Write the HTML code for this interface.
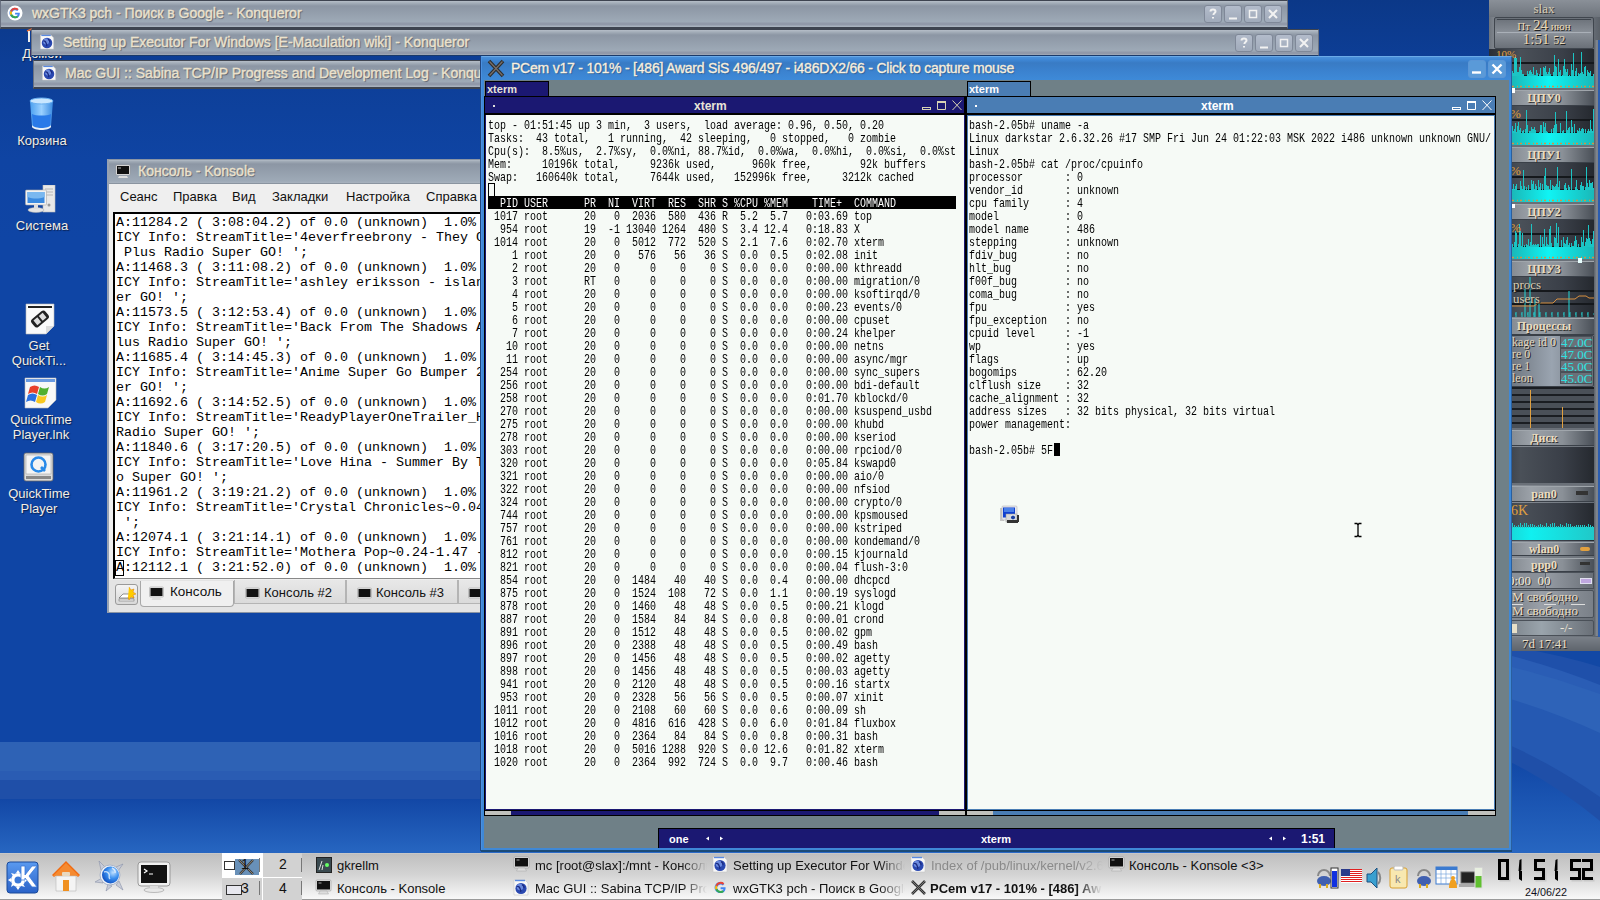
<!DOCTYPE html><html><head><meta charset="utf-8"><style>*{margin:0;padding:0;box-sizing:border-box}
html,body{width:1600px;height:900px;overflow:hidden}
body{position:relative;font-family:"Liberation Sans",sans-serif;background:linear-gradient(#0b3888 0,#0d3e96 60px,#0f44a3 160px,#0f45a5 240px,#0f45a5 100%)}
.a{position:absolute}
pre{font-family:"Liberation Mono",monospace;margin:0}
.tb{position:absolute;height:28px;background:linear-gradient(#b6bec8 0,#a4aeb9 2px,#8c96a4 5px,#9eaab7 21px,#9199a9 22px,#9199a9 24px,#a8b2be 25px);border-top:1px solid #3e4450;border-bottom:2px solid #3e4450;border-left:1px solid #6a7282;border-right:1px solid #6a7282;overflow:hidden}
.tt{position:absolute;top:4px;font-size:14px;color:#ece2cc;-webkit-text-stroke:0.35px #ece2cc;text-shadow:1px 1px 1px #505868;white-space:nowrap}
.btn{position:absolute;top:4px;width:18px;height:18px;border:1px solid #7f8898;border-radius:3px;background:linear-gradient(#b3bccb,#a0aaba)}
.btn svg{position:absolute;left:0;top:0}
.gl{position:absolute;width:16px;height:16px}
.hd{background:#000;color:#fff}
.cur{background:#000}
</style></head><body><div class="a" style="left:0;top:742px;width:1600px;height:29px;background:#2e62b5"></div>
<div class="a" style="left:0;top:771px;width:1600px;height:9px;background:#2a5cb3"></div>
<div class="a" style="left:0;top:780px;width:1600px;height:19px;background:#1f4fa8"></div>
<div class="a" style="left:0;top:799px;width:1600px;height:54px;background:linear-gradient(#1247a6,#2766c1)"></div>
<style>.dl{position:absolute;font-size:13px;color:#f2eee4;text-shadow:1px 1px 1px #0a2050;white-space:nowrap;text-align:center;width:90px;line-height:15px}</style>
<svg class="a" style="left:29px;top:97px" width="25" height="33" viewBox="0 0 25 33"><defs><linearGradient id="tg" x1="0" x2="1"><stop offset="0" stop-color="#4aa0f0"/><stop offset=".5" stop-color="#9ad0ff"/><stop offset="1" stop-color="#3a8ae0"/></linearGradient></defs><path d="M1 4c0-3 23-3 23 0l-2 25c0 3-19 3-19 0z" fill="url(#tg)"/><ellipse cx="12.5" cy="4" rx="11.5" ry="3" fill="#c8e6ff" stroke="#6ab0f0"/><path d="M3 17c4 2 15 2 19 0l-.8 12c0 3-17.4 3-17.4 0z" fill="#2a7ae8"/><path d="M3 28c2 4 17 4 19 0v2c-2 4-17 4-19 0z" fill="#e8f0f8"/></svg>
<div class="dl" style="left:-3px;top:133px">Корзина</div>
<svg class="a" style="left:25px;top:185px" width="32" height="28" viewBox="0 0 32 28"><rect x="18" y="0" width="12" height="27" fill="#e8e8e8" stroke="#bbb" stroke-width=".6"/><path d="M20 4h8M20 7h8M20 10h8" stroke="#aaa" stroke-width=".8"/><circle cx="24" cy="20" r="1.5" fill="#999"/><rect x="0.5" y="5" width="21" height="15" rx="1" fill="#f2f2f2" stroke="#aaa" stroke-width=".6"/><rect x="2.5" y="7" width="17" height="11" fill="#3a8ae0"/><path d="M2.5 7h17v5c-6 2-11 2-17 0z" fill="#7ab8f0"/><ellipse cx="11" cy="25" rx="8" ry="2.5" fill="#e4e4e4" stroke="#aaa" stroke-width=".5"/><rect x="9" y="20" width="4" height="4" fill="#ddd"/></svg>
<div class="dl" style="left:-3px;top:218px">Система</div>
<svg class="a" style="left:25px;top:303px" width="30" height="32" viewBox="0 0 30 32"><path d="M1 1h28v22l-8 8H1z" fill="#fafafa" stroke="#bbb" stroke-width=".6"/><rect x="3" y="3" width="24" height="2" fill="#222"/><path d="M21 31l8-8h-8z" fill="#ddd"/><g transform="rotate(-40 15 16)"><rect x="6" y="11" width="18" height="10" rx="3" fill="#222"/><rect x="9" y="13" width="5" height="6" fill="#ddd"/><rect x="16" y="13" width="5" height="6" fill="#ddd"/></g></svg>
<div class="dl" style="left:-6px;top:338px">Get<br>QuickTi...</div>
<svg class="a" style="left:24px;top:377px" width="33" height="32" viewBox="0 0 33 32"><path d="M1 1h31v22l-8 8H1z" fill="#f8f8f8" stroke="#bbb" stroke-width=".6"/><rect x="2" y="2" width="29" height="3" fill="#6a9ae0"/><path d="M6 10c3-2 6-2 9 0l-2 7c-3-2-6-2-9 0z" fill="#e8402a"/><path d="M16 10c3 2 6 2 9 0l-2 7c-3 2-6 2-9 0z" fill="#50b030"/><path d="M4 18c3-2 6-2 9 0l-2 7c-3-2-6-2-9 0z" fill="#2a70e0"/><path d="M14 18c3 2 6 2 9 0l-2 7c-3 2-6 2-9 0z" fill="#f8c820"/></svg>
<div class="dl" style="left:-4px;top:412px">QuickTime<br>Player.lnk</div>
<svg class="a" style="left:23px;top:452px" width="31" height="30" viewBox="0 0 31 30"><rect x="1" y="1" width="29" height="28" rx="2" fill="#dcdcdc" stroke="#666" stroke-width=".8"/><rect x="3" y="3" width="25" height="19" fill="#f4f4f4" stroke="#999" stroke-width=".5"/><circle cx="15.5" cy="12.5" r="7" fill="none" stroke="#2a8ae8" stroke-width="2.6"/><path d="M18 15l4 4" stroke="#2a8ae8" stroke-width="2.6"/><rect x="3" y="24" width="25" height="3" fill="#888"/></svg>
<div class="dl" style="left:-6px;top:486px">QuickTime<br>Player</div>
<svg class="a" style="left:1500px;top:640px" width="100" height="213" viewBox="1500 640 100 213">
<defs><linearGradient id="dkg" x1="0" y1="0" x2="0" y2="1"><stop offset="0" stop-color="#1046a5"/><stop offset="1" stop-color="#2766c1"/></linearGradient></defs>
<rect x="1500" y="640" width="100" height="213" fill="#1248a5"/>
<path d="M1500 645Q1550 652 1600 667V853H1500z" fill="#1f50aa"/>
<path d="M1500 653Q1550 665 1600 685V853H1500z" fill="#2a5db5"/>
<path d="M1500 664Q1550 676 1600 694V853H1500z" fill="#2e63b8"/>
<path d="M1500 696Q1550 710 1600 733V853H1500z" fill="#2559b2"/>
<path d="M1500 741Q1550 762 1600 797V853H1500z" fill="#1f4fa8"/>
<path d="M1500 757Q1550 780 1600 821V853H1500z" fill="url(#dkg)"/>
</svg>
<div class="a" style="left:1489px;top:0;width:111px;height:651px;background:linear-gradient(90deg,#6e747c,#8a9098 8%,#7c828a 50%,#6a7078 92%,#5a6068)"></div>
<div class="a" style="left:1594px;top:40px;width:6px;height:596px;background:linear-gradient(90deg,#5a6068,#868c94,#4a5058)"></div>
<div class="a" style="left:1598px;top:40px;width:2px;height:611px;background:#2a5cb0"></div>
<div class="a" style="left:1489px;top:0;width:111px;height:17px;background:linear-gradient(#8a9098,#6e747c)"></div>
<div class="a" style="left:1489px;top:1px;width:110px;text-align:center;font-family:'Liberation Serif',serif;font-size:13px;color:#d8ccb4;text-shadow:1px 1px 0 #333">slax</div>
<div class="a" style="left:1494px;top:17px;width:100px;height:32px;background:linear-gradient(#6a7078,#8a9098 50%,#6a7078);border:1px solid #40464e;border-radius:2px"></div>
<div class="a" style="left:1497px;top:19px;width:94px;height:1px;background:#3e444c"></div>
<div class="a" style="left:1497px;top:32px;width:94px;height:1px;background:#aab0b8"></div>
<div class="a" style="left:1494px;top:18px;width:100px;text-align:center;font-family:'Liberation Serif',serif;font-size:11px;color:#e8d8b8;text-shadow:1px 1px 0 #222;line-height:15px">Пт <span style="font-size:15px">24</span> июн</div>
<div class="a" style="left:1494px;top:31px;width:100px;text-align:center;font-family:'Liberation Serif',serif;font-size:15px;color:#e8d8b8;text-shadow:1px 1px 0 #222;line-height:17px">1:51 <span style="font-size:12px">52</span></div>
<div class="a" style="left:1489px;top:49px;width:105px;height:39px;background:linear-gradient(90deg,#2a2e36,#4a5058 30%,#3a3f48 70%,#25292f);overflow:hidden"><div class="a" style="left:0;top:13px;width:105px;height:2px;background:#15181c"></div><div class="a" style="left:0;top:26px;width:105px;height:2px;background:#15181c"></div><svg class="a" style="left:0;top:0" width="105" height="39"><defs><linearGradient id="cg49" x1="0" x2="1"><stop offset="0" stop-color="#1ab8b8"/><stop offset=".45" stop-color="#10f4f4"/><stop offset="1" stop-color="#1ab8b8"/></linearGradient></defs><path d="M23.5 39V22M24.5 39V24M25.5 39V9M26.5 39V8M27.5 39V9M28.5 39V23M29.5 39V23M30.5 39V18M31.5 39V8M32.5 39V21M33.5 39V25M34.5 39V25M35.5 39V29M36.5 39V29M37.5 39V28M38.5 39V22M39.5 39V25M40.5 39V22M41.5 39V21M42.5 39V23M43.5 39V25M44.5 39V18M45.5 39V26M46.5 39V26M47.5 39V21M48.5 39V24M49.5 39V29M50.5 39V25M51.5 39V19M52.5 39V27M53.5 39V29M54.5 39V18M55.5 39V19M56.5 39V17M57.5 39V23M58.5 39V25M59.5 39V23M60.5 39V19M61.5 39V25M62.5 39V29M63.5 39V27M64.5 39V23M65.5 39V6M66.5 39V17M67.5 39V18M68.5 39V27M69.5 39V10M70.5 39V23M71.5 39V21M72.5 39V28M73.5 39V26M74.5 39V17M75.5 39V10M76.5 39V20M77.5 39V23M78.5 39V20M79.5 39V27M80.5 39V26M81.5 39V28M82.5 39V15M83.5 39V21M84.5 39V4M85.5 39V27M86.5 39V22M87.5 39V19M88.5 39V27M89.5 39V24M90.5 39V25M91.5 39V24M92.5 39V3M93.5 39V23M94.5 39V25M95.5 39V18M96.5 39V17M97.5 39V29M98.5 39V21M99.5 39V23M100.5 39V24M101.5 39V22M102.5 39V27M103.5 39V29M104.5 39V25" stroke="#1cc4c4" stroke-width="1"/><rect x="23" y="27" width="82" height="12" fill="url(#cg49)"/><path d="M23 37.5H105" stroke="#d89040" stroke-width="1.5" stroke-dasharray="2 3 1 2"/></svg></div>
<div class="a" style="left:1489px;top:88px;width:105px;height:2px;background:#6a7078"></div>
<div class="a" style="left:1489px;top:90px;width:105px;height:16px;background:linear-gradient(90deg,#6c7279,#9ba1a8 40%,#8a9097 70%,#4a5058);border-top:1px solid #a0a6ac;border-bottom:1px solid #3a4048"></div><div class="a" style="left:1489px;top:90px;width:110px;text-align:center;font-family:'Liberation Serif',serif;font-weight:bold;font-size:12px;line-height:16px;color:#eadcc0;text-shadow:1px 1px 0 #333">ЦПУ0</div>
<div class="a" style="left:1489px;top:106px;width:105px;height:39px;background:linear-gradient(90deg,#2a2e36,#4a5058 30%,#3a3f48 70%,#25292f);overflow:hidden"><div class="a" style="left:0;top:13px;width:105px;height:2px;background:#15181c"></div><div class="a" style="left:0;top:26px;width:105px;height:2px;background:#15181c"></div><svg class="a" style="left:0;top:0" width="105" height="39"><defs><linearGradient id="cg106" x1="0" x2="1"><stop offset="0" stop-color="#1ab8b8"/><stop offset=".45" stop-color="#10f4f4"/><stop offset="1" stop-color="#1ab8b8"/></linearGradient></defs><path d="M23.5 39V20M24.5 39V25M25.5 39V23M26.5 39V17M27.5 39V26M28.5 39V20M29.5 39V16M30.5 39V24M31.5 39V22M32.5 39V28M33.5 39V25M34.5 39V24M35.5 39V27M36.5 39V23M37.5 39V4M38.5 39V19M39.5 39V27M40.5 39V25M41.5 39V25M42.5 39V21M43.5 39V23M44.5 39V23M45.5 39V21M46.5 39V24M47.5 39V28M48.5 39V27M49.5 39V29M50.5 39V26M51.5 39V19M52.5 39V19M53.5 39V27M54.5 39V16M55.5 39V21M56.5 39V17M57.5 39V25M58.5 39V26M59.5 39V27M60.5 39V29M61.5 39V29M62.5 39V23M63.5 39V28M64.5 39V22M65.5 39V19M66.5 39V6M67.5 39V18M68.5 39V29M69.5 39V28M70.5 39V29M71.5 39V17M72.5 39V28M73.5 39V25M74.5 39V24M75.5 39V28M76.5 39V28M77.5 39V5M78.5 39V24M79.5 39V22M80.5 39V21M81.5 39V28M82.5 39V14M83.5 39V21M84.5 39V27M85.5 39V18M86.5 39V29M87.5 39V27M88.5 39V24M89.5 39V25M90.5 39V22M91.5 39V25M92.5 39V23M93.5 39V22M94.5 39V23M95.5 39V28M96.5 39V23M97.5 39V27M98.5 39V25M99.5 39V23M100.5 39V25M101.5 39V14M102.5 39V23M103.5 39V25M104.5 39V3" stroke="#1cc4c4" stroke-width="1"/><rect x="23" y="27" width="82" height="12" fill="url(#cg106)"/><path d="M23 37.5H105" stroke="#d89040" stroke-width="1.5" stroke-dasharray="2 3 1 2"/></svg></div>
<div class="a" style="left:1489px;top:145px;width:105px;height:2px;background:#6a7078"></div>
<div class="a" style="left:1489px;top:147px;width:105px;height:16px;background:linear-gradient(90deg,#6c7279,#9ba1a8 40%,#8a9097 70%,#4a5058);border-top:1px solid #a0a6ac;border-bottom:1px solid #3a4048"></div><div class="a" style="left:1489px;top:147px;width:110px;text-align:center;font-family:'Liberation Serif',serif;font-weight:bold;font-size:12px;line-height:16px;color:#eadcc0;text-shadow:1px 1px 0 #333">ЦПУ1</div>
<div class="a" style="left:1489px;top:163px;width:105px;height:39px;background:linear-gradient(90deg,#2a2e36,#4a5058 30%,#3a3f48 70%,#25292f);overflow:hidden"><div class="a" style="left:0;top:13px;width:105px;height:2px;background:#15181c"></div><div class="a" style="left:0;top:26px;width:105px;height:2px;background:#15181c"></div><svg class="a" style="left:0;top:0" width="105" height="39"><defs><linearGradient id="cg163" x1="0" x2="1"><stop offset="0" stop-color="#1ab8b8"/><stop offset=".45" stop-color="#10f4f4"/><stop offset="1" stop-color="#1ab8b8"/></linearGradient></defs><path d="M23.5 39V26M24.5 39V21M25.5 39V26M26.5 39V23M27.5 39V21M28.5 39V27M29.5 39V28M30.5 39V28M31.5 39V18M32.5 39V23M33.5 39V26M34.5 39V7M35.5 39V23M36.5 39V28M37.5 39V24M38.5 39V28M39.5 39V22M40.5 39V28M41.5 39V29M42.5 39V17M43.5 39V21M44.5 39V18M45.5 39V26M46.5 39V21M47.5 39V23M48.5 39V29M49.5 39V17M50.5 39V24M51.5 39V20M52.5 39V29M53.5 39V21M54.5 39V29M55.5 39V13M56.5 39V5M57.5 39V22M58.5 39V23M59.5 39V23M60.5 39V26M61.5 39V17M62.5 39V29M63.5 39V22M64.5 39V23M65.5 39V24M66.5 39V23M67.5 39V21M68.5 39V4M69.5 39V24M70.5 39V18M71.5 39V27M72.5 39V29M73.5 39V28M74.5 39V28M75.5 39V22M76.5 39V20M77.5 39V25M78.5 39V27M79.5 39V22M80.5 39V24M81.5 39V29M82.5 39V6M83.5 39V28M84.5 39V28M85.5 39V29M86.5 39V24M87.5 39V17M88.5 39V26M89.5 39V27M90.5 39V28M91.5 39V22M92.5 39V19M93.5 39V23M94.5 39V23M95.5 39V27M96.5 39V24M97.5 39V4M98.5 39V20M99.5 39V24M100.5 39V17M101.5 39V20M102.5 39V20M103.5 39V19M104.5 39V25" stroke="#1cc4c4" stroke-width="1"/><rect x="23" y="27" width="82" height="12" fill="url(#cg163)"/><path d="M23 37.5H105" stroke="#d89040" stroke-width="1.5" stroke-dasharray="2 3 1 2"/></svg></div>
<div class="a" style="left:1489px;top:202px;width:105px;height:2px;background:#6a7078"></div>
<div class="a" style="left:1489px;top:204px;width:105px;height:16px;background:linear-gradient(90deg,#6c7279,#9ba1a8 40%,#8a9097 70%,#4a5058);border-top:1px solid #a0a6ac;border-bottom:1px solid #3a4048"></div><div class="a" style="left:1489px;top:204px;width:110px;text-align:center;font-family:'Liberation Serif',serif;font-weight:bold;font-size:12px;line-height:16px;color:#eadcc0;text-shadow:1px 1px 0 #333">ЦПУ2</div>
<div class="a" style="left:1489px;top:220px;width:105px;height:39px;background:linear-gradient(90deg,#2a2e36,#4a5058 30%,#3a3f48 70%,#25292f);overflow:hidden"><div class="a" style="left:0;top:13px;width:105px;height:2px;background:#15181c"></div><div class="a" style="left:0;top:26px;width:105px;height:2px;background:#15181c"></div><svg class="a" style="left:0;top:0" width="105" height="39"><defs><linearGradient id="cg220" x1="0" x2="1"><stop offset="0" stop-color="#1ab8b8"/><stop offset=".45" stop-color="#10f4f4"/><stop offset="1" stop-color="#1ab8b8"/></linearGradient></defs><path d="M23.5 39V24M24.5 39V27M25.5 39V22M26.5 39V11M27.5 39V13M28.5 39V28M29.5 39V24M30.5 39V4M31.5 39V11M32.5 39V26M33.5 39V13M34.5 39V29M35.5 39V25M36.5 39V28M37.5 39V24M38.5 39V25M39.5 39V19M40.5 39V26M41.5 39V22M42.5 39V4M43.5 39V25M44.5 39V24M45.5 39V25M46.5 39V24M47.5 39V25M48.5 39V24M49.5 39V24M50.5 39V29M51.5 39V15M52.5 39V29M53.5 39V17M54.5 39V24M55.5 39V9M56.5 39V26M57.5 39V17M58.5 39V24M59.5 39V25M60.5 39V9M61.5 39V6M62.5 39V23M63.5 39V28M64.5 39V28M65.5 39V17M66.5 39V18M67.5 39V3M68.5 39V23M69.5 39V7M70.5 39V29M71.5 39V27M72.5 39V20M73.5 39V28M74.5 39V17M75.5 39V23M76.5 39V24M77.5 39V20M78.5 39V17M79.5 39V25M80.5 39V23M81.5 39V29M82.5 39V23M83.5 39V26M84.5 39V26M85.5 39V21M86.5 39V16M87.5 39V20M88.5 39V28M89.5 39V24M90.5 39V29M91.5 39V28M92.5 39V17M93.5 39V22M94.5 39V10M95.5 39V26M96.5 39V22M97.5 39V18M98.5 39V19M99.5 39V5M100.5 39V18M101.5 39V21M102.5 39V24M103.5 39V19M104.5 39V11" stroke="#1cc4c4" stroke-width="1"/><rect x="23" y="27" width="82" height="12" fill="url(#cg220)"/><path d="M23 37.5H105" stroke="#d89040" stroke-width="1.5" stroke-dasharray="2 3 1 2"/></svg></div>
<div class="a" style="left:1489px;top:259px;width:105px;height:2px;background:#6a7078"></div>
<div class="a" style="left:1489px;top:261px;width:105px;height:16px;background:linear-gradient(90deg,#6c7279,#9ba1a8 40%,#8a9097 70%,#4a5058);border-top:1px solid #a0a6ac;border-bottom:1px solid #3a4048"></div><div class="a" style="left:1489px;top:261px;width:110px;text-align:center;font-family:'Liberation Serif',serif;font-weight:bold;font-size:12px;line-height:16px;color:#eadcc0;text-shadow:1px 1px 0 #333">ЦПУ3</div>
<div class="a" style="left:1496px;top:49px;font-family:'Liberation Serif',serif;font-size:11px;line-height:11px;color:#e0a040">10%</div>
<div class="a" style="left:1510px;top:107px;font-family:'Liberation Serif',serif;font-size:13px;line-height:13px;color:#e0a040">%</div>
<div class="a" style="left:1510px;top:164px;font-family:'Liberation Serif',serif;font-size:13px;line-height:13px;color:#e0a040">%</div>
<div class="a" style="left:1510px;top:221px;font-family:'Liberation Serif',serif;font-size:13px;line-height:13px;color:#e0a040">%</div>
<div class="a" style="left:1512px;top:88px;width:3px;height:5px;background:#fff"></div>
<div class="a" style="left:1512px;top:204px;width:3px;height:4px;background:#fff"></div>
<div class="a" style="left:1578px;top:258px;width:4px;height:5px;background:#e8ffff"></div>
<div class="a" style="left:1489px;top:277px;width:105px;height:40px;background:linear-gradient(90deg,#2a2e36,#4a5058 30%,#3a3f48 70%,#25292f);overflow:hidden"><div class="a" style="left:0;top:13px;width:105px;height:2px;background:#15181c"></div><div class="a" style="left:0;top:26px;width:105px;height:2px;background:#15181c"></div></div>
<svg class="a" style="left:1489px;top:277px" width="105" height="40"><path d="M20 37H105" stroke="#22bbbb" stroke-dasharray="1 5"/><path d="M21 40v-5M27 40v-5M33 40v-5M39 40v-5M45 40v-5M51 40v-5M57 40v-5M63 40v-5M69 40v-5M75 40v-5M81 40v-5M87 40v-5M93 40v-5M99 40v-5" stroke="#22cccc"/><path d="M36 40V12M41 40V0M46 40V22M50 40V26M80 40V14" stroke="#22d8d8"/><path d="M20 29H45l4-3h15l4-4h18l4-3h7l3 2h10" stroke="#d89040" fill="none"/></svg>
<div class="a" style="left:1513px;top:278px;font-family:'Liberation Serif',serif;font-size:13px;line-height:14px;color:#d8ccb4;text-shadow:1px 1px 0 #222">procs<br>users</div>
<div class="a" style="left:1489px;top:318px;width:105px;height:17px;background:linear-gradient(90deg,#6c7279,#9ba1a8 40%,#8a9097 70%,#4a5058);border-top:1px solid #a0a6ac;border-bottom:1px solid #3a4048"></div><div class="a" style="left:1489px;top:318px;width:110px;text-align:center;font-family:'Liberation Serif',serif;font-weight:bold;font-size:12px;line-height:17px;color:#eadcc0;text-shadow:1px 1px 0 #333">Процессы</div>
<div class="a" style="left:1489px;top:335px;width:105px;height:52px;background:linear-gradient(90deg,#5a6068,#9aa4b0 60%,#6a7078);border:1px solid #3a4048;border-radius:2px"></div>
<div class="a" style="left:1512px;top:336px;font-family:'Liberation Serif',serif;font-size:12px;line-height:12px;color:#e0d4bc;text-shadow:1px 1px 0 #222">kage id 0</div>
<div class="a" style="left:1560px;top:336px;width:32px;height:12px;border:1px solid #4a5058;background:#6a7078"></div>
<div class="a" style="left:1561px;top:336px;font-family:'Liberation Serif',serif;font-size:13px;line-height:13px;color:#30e0e0">47.0C</div>
<div class="a" style="left:1512px;top:348px;font-family:'Liberation Serif',serif;font-size:12px;line-height:12px;color:#e0d4bc;text-shadow:1px 1px 0 #222">re 0</div>
<div class="a" style="left:1560px;top:348px;width:32px;height:12px;border:1px solid #4a5058;background:#6a7078"></div>
<div class="a" style="left:1561px;top:348px;font-family:'Liberation Serif',serif;font-size:13px;line-height:13px;color:#30e0e0">47.0C</div>
<div class="a" style="left:1512px;top:360px;font-family:'Liberation Serif',serif;font-size:12px;line-height:12px;color:#e0d4bc;text-shadow:1px 1px 0 #222">re 1</div>
<div class="a" style="left:1560px;top:360px;width:32px;height:12px;border:1px solid #4a5058;background:#6a7078"></div>
<div class="a" style="left:1561px;top:360px;font-family:'Liberation Serif',serif;font-size:13px;line-height:13px;color:#30e0e0">45.0C</div>
<div class="a" style="left:1512px;top:372px;font-family:'Liberation Serif',serif;font-size:12px;line-height:12px;color:#e0d4bc;text-shadow:1px 1px 0 #222">leon</div>
<div class="a" style="left:1560px;top:372px;width:32px;height:12px;border:1px solid #4a5058;background:#6a7078"></div>
<div class="a" style="left:1561px;top:372px;font-family:'Liberation Serif',serif;font-size:13px;line-height:13px;color:#30e0e0">45.0C</div>
<div class="a" style="left:1489px;top:387px;width:105px;height:41px;background:repeating-linear-gradient(#1a1d22 0 2px,#4a5058 2px 7px)"></div>
<div class="a" style="left:1530px;top:390px;width:1px;height:38px;background:#e0a040"></div>
<div class="a" style="left:1562px;top:407px;width:1px;height:21px;background:#e0a040"></div>
<div class="a" style="left:1489px;top:428px;width:105px;height:2px;background:#6a7078"></div>
<div class="a" style="left:1489px;top:430px;width:105px;height:16px;background:linear-gradient(90deg,#6c7279,#9ba1a8 40%,#8a9097 70%,#4a5058);border-top:1px solid #a0a6ac;border-bottom:1px solid #3a4048"></div><div class="a" style="left:1489px;top:430px;width:110px;text-align:center;font-family:'Liberation Serif',serif;font-weight:bold;font-size:12px;line-height:16px;color:#eadcc0;text-shadow:1px 1px 0 #333">Диск</div>
<div class="a" style="left:1489px;top:447px;width:105px;height:36px;background:linear-gradient(90deg,#2a2e36,#4a5058 30%,#3a3f48 70%,#25292f)"></div>
<div class="a" style="left:1489px;top:483px;width:105px;height:2px;background:#6a7078"></div>
<div class="a" style="left:1489px;top:486px;width:105px;height:16px;background:linear-gradient(90deg,#6c7279,#9ba1a8 40%,#8a9097 70%,#4a5058);border-top:1px solid #a0a6ac;border-bottom:1px solid #3a4048"></div><div class="a" style="left:1489px;top:486px;width:110px;text-align:center;font-family:'Liberation Serif',serif;font-weight:bold;font-size:12px;line-height:16px;color:#eadcc0;text-shadow:1px 1px 0 #333">pan0</div>
<div class="a" style="left:1576px;top:491px;width:12px;height:4px;background:#333"></div>
<div class="a" style="left:1489px;top:503px;width:105px;height:38px;background:linear-gradient(90deg,#2a2e36,#4a5058 30%,#3a3f48 70%,#25292f)"></div>
<div class="a" style="left:1489px;top:527px;width:105px;height:13px;background:linear-gradient(90deg,#20c0c0,#10f0f0 40%,#20c8c8)"></div>
<svg class="a" style="left:1512px;top:522px" width="82" height="6"><path d="M0.5 6V1M2.5 6V3M4.5 6V4M6.5 6V3M8.5 6V1M10.5 6V3M12.5 6V1M14.5 6V1M16.5 6V3M18.5 6V2M20.5 6V2M22.5 6V3M24.5 6V4M26.5 6V3M28.5 6V2M30.5 6V3M32.5 6V4M34.5 6V1M36.5 6V4M38.5 6V2M40.5 6V1M42.5 6V1M44.5 6V4M46.5 6V4M48.5 6V2M50.5 6V3M52.5 6V4M54.5 6V1M56.5 6V2M58.5 6V2M60.5 6V4M62.5 6V4M64.5 6V3M66.5 6V3M68.5 6V3M70.5 6V3M72.5 6V3M74.5 6V4M76.5 6V2M78.5 6V3M80.5 6V4" stroke="#20c8c8"/></svg>
<div class="a" style="left:1511px;top:504px;font-family:'Liberation Serif',serif;font-size:14px;line-height:14px;color:#e0a040">6K</div>
<div class="a" style="left:1489px;top:542px;width:105px;height:14px;background:linear-gradient(90deg,#6c7279,#9ba1a8 40%,#8a9097 70%,#4a5058);border-top:1px solid #a0a6ac;border-bottom:1px solid #3a4048"></div><div class="a" style="left:1489px;top:542px;width:110px;text-align:center;font-family:'Liberation Serif',serif;font-weight:bold;font-size:12px;line-height:14px;color:#eadcc0;text-shadow:1px 1px 0 #333">wlan0</div>
<div class="a" style="left:1580px;top:547px;width:10px;height:4px;border-radius:2px;background:#e0a040"></div>
<div class="a" style="left:1489px;top:558px;width:105px;height:14px;background:linear-gradient(90deg,#6c7279,#9ba1a8 40%,#8a9097 70%,#4a5058);border-top:1px solid #a0a6ac;border-bottom:1px solid #3a4048"></div><div class="a" style="left:1489px;top:558px;width:110px;text-align:center;font-family:'Liberation Serif',serif;font-weight:bold;font-size:12px;line-height:14px;color:#eadcc0;text-shadow:1px 1px 0 #333">ppp0</div>
<div class="a" style="left:1580px;top:562px;width:10px;height:3px;background:#333"></div>
<div class="a" style="left:1489px;top:572px;width:105px;height:17px;background:linear-gradient(90deg,#7a8088,#9aa0a8 50%,#6a7078);border:1px solid #4a5058"></div>
<div class="a" style="left:1489px;top:573px;width:57px;height:15px;background:#8a9098;border-right:1px solid #5a6068"></div>
<div class="a" style="left:1508px;top:573px;font-family:'Liberation Serif',serif;font-size:13px;line-height:15px;color:#f0e8d8;text-shadow:1px 1px 0 #333">0:00&nbsp; 00</div>
<div class="a" style="left:1580px;top:578px;width:12px;height:6px;background:#c0a8e0;border:1px solid #e0e0f0"></div>
<div class="a" style="left:1489px;top:590px;width:105px;height:28px;background:linear-gradient(90deg,#6a7078,#9aa0a8 50%,#7a8088);border:1px solid #4a5058;border-radius:2px"></div>
<div class="a" style="left:1512px;top:590px;font-family:'Liberation Serif',serif;font-size:13px;line-height:14px;color:#e8dcc4;text-shadow:1px 1px 0 #222">M свободно<br>M свободно</div>
<div class="a" style="left:1511px;top:604px;width:12px;height:1px;background:#ddd"></div><div class="a" style="left:1544px;top:604px;width:12px;height:1px;background:#ddd"></div><div class="a" style="left:1571px;top:604px;width:14px;height:1px;background:#ddd"></div>
<div class="a" style="left:1489px;top:620px;width:105px;height:16px;background:linear-gradient(90deg,#6a7078,#9aa4ac 50%,#6a7078);border:1px solid #4a5058;border-radius:2px"></div>
<div class="a" style="left:1512px;top:624px;width:5px;height:9px;background:#e8e0c8"></div>
<div class="a" style="left:1560px;top:620px;font-family:'Liberation Serif',serif;font-size:13px;line-height:16px;color:#f0e8d8">-/-</div>
<div class="a" style="left:1489px;top:637px;width:111px;height:14px;background:linear-gradient(#7a8088,#5e646c)"></div>
<div class="a" style="left:1522px;top:636px;font-family:'Liberation Serif',serif;font-size:13px;line-height:15px;color:#e8dcc4;text-shadow:1px 1px 0 #222">7d 17:41</div><div class="tb" style="left:0;top:0;width:1288px;height:29px">
 <svg class="gl" style="left:6px;top:4px" width="17" height="17" viewBox="0 0 17 17"><circle cx="8.5" cy="8.5" r="8" fill="#fff"/><path d="M13.5 8.2H8.6v2h2.8c-.3 1.3-1.4 2.2-2.9 2.2a3.4 3.4 0 1 1 2.3-5.9l1.5-1.5A5.5 5.5 0 1 0 8.5 14c3 0 5.1-2.1 5.1-5.1 0-.3 0-.5-.1-.7z" fill="#4285f4"/><path d="M3.6 6.2l1.7 1.3a3.4 3.4 0 0 1 5.5-1.8l1.5-1.5A5.5 5.5 0 0 0 3.6 6.2z" fill="#ea4335"/><path d="M3.6 10.8a5.5 5.5 0 0 0 4.9 3.2c1.4 0 2.7-.5 3.6-1.3l-1.7-1.4c-.5.4-1.2.6-1.9.6a3.4 3.4 0 0 1-3.2-2.3z" fill="#34a853"/><path d="M3.6 6.2a5.5 5.5 0 0 0 0 4.6l1.7-1.3a3.4 3.4 0 0 1 0-2z" fill="#fbbc05"/></svg>
 <div class="tt" style="left:31px">wxGTK3 pch - Поиск в Google - Konqueror</div>
 <div class="btn" style="left:1203px"><svg width="16" height="16"><path d="M5.5 5.5c0-1.5 1-2 2.5-2s2.5.7 2.5 2c0 1.4-2 1.5-2 3v.5M8 11v1.5" stroke="#f2f2f2" stroke-width="2" fill="none"/></svg></div>
 <div class="btn" style="left:1223px"><svg width="16" height="16"><path d="M4 12.5h8" stroke="#f2f2f2" stroke-width="2"/></svg></div>
 <div class="btn" style="left:1243px"><svg width="16" height="16"><rect x="4.5" y="4.5" width="7" height="7" stroke="#f2f2f2" stroke-width="1.5" fill="none"/></svg></div>
 <div class="btn" style="left:1263px"><svg width="16" height="16"><path d="M4 4l8 8M12 4l-8 8" stroke="#f2f2f2" stroke-width="2"/></svg></div>
</div>
<svg class="a" style="left:24px;top:28px" width="12" height="14"><path d="M3 3l5-2" stroke="#e86a30" stroke-width="1.6"/><path d="M5 3v11" stroke="#eee" stroke-width="2"/></svg>
<div class="dl" style="left:-3px;top:46px">Домой</div>
<div class="tb" style="left:31px;top:29px;width:1288px;height:27px;border-bottom:1px solid #1a3a6a">
 <svg class="gl" style="left:7px;top:4px" width="16" height="17" viewBox="0 0 16 17"><path d="M1 1h11l3 3v12H1z" fill="#f8f8f8" stroke="#c8c8c8" stroke-width=".6"/><path d="M2 1.5h10" stroke="#5a8ae0" stroke-width="1.4"/><circle cx="8" cy="9.5" r="5.6" fill="#2a48b0"/><circle cx="7" cy="8" r="3.2" fill="#7a9ae8" opacity=".8"/><path d="M4 7.5c1.5-.5 2.5.5 3 2s1.5 2 .5 3.5M9 5.5c1 1 2.5 1.5 2 3.5" stroke="#1a2a80" stroke-width="1.3" fill="none"/></svg>
 <div class="tt" style="left:31px">Setting up Executor For Windows [E-Maculation wiki] - Konqueror</div>
 <div class="btn" style="left:1203px"><svg width="16" height="16"><path d="M5.5 5.5c0-1.5 1-2 2.5-2s2.5.7 2.5 2c0 1.4-2 1.5-2 3v.5M8 11v1.5" stroke="#f2f2f2" stroke-width="2" fill="none"/></svg></div>
 <div class="btn" style="left:1223px"><svg width="16" height="16"><path d="M4 12.5h8" stroke="#f2f2f2" stroke-width="2"/></svg></div>
 <div class="btn" style="left:1243px"><svg width="16" height="16"><rect x="4.5" y="4.5" width="7" height="7" stroke="#f2f2f2" stroke-width="1.5" fill="none"/></svg></div>
 <div class="btn" style="left:1263px"><svg width="16" height="16"><path d="M4 4l8 8M12 4l-8 8" stroke="#f2f2f2" stroke-width="2"/></svg></div>
</div>
<div class="tb" style="left:33px;top:60px;width:460px;height:29px">
 <svg class="gl" style="left:7px;top:4px" width="16" height="17" viewBox="0 0 16 17"><path d="M1 1h11l3 3v12H1z" fill="#f8f8f8" stroke="#c8c8c8" stroke-width=".6"/><path d="M2 1.5h10" stroke="#5a8ae0" stroke-width="1.4"/><circle cx="8" cy="9.5" r="5.6" fill="#2a48b0"/><circle cx="7" cy="8" r="3.2" fill="#7a9ae8" opacity=".8"/><path d="M4 7.5c1.5-.5 2.5.5 3 2s1.5 2 .5 3.5M9 5.5c1 1 2.5 1.5 2 3.5" stroke="#1a2a80" stroke-width="1.3" fill="none"/></svg>
 <div class="tt" style="left:31px">Mac GUI :: Sabina TCP/IP Progress and Development Log - Konqueror</div>
</div>
<div class="a" style="left:107px;top:159px;width:381px;height:454px;background:#efefef;border:1px solid #8a94a4;border-left:2px solid #98a2b2;overflow:hidden">
 <div class="a" style="left:0;top:0;width:380px;height:24px;background:linear-gradient(#b6bec8 0,#a4aeb9 1px,#8c96a4 4px,#9eaab7 21px,#a8b2be 23px);border-bottom:1px solid #8a94a0">
  <svg class="a" style="left:6px;top:4px" width="16" height="16" viewBox="0 0 16 16"><rect x="1" y="1" width="14" height="10" rx="1" fill="#e8e8e8" stroke="#999" stroke-width=".5"/><rect x="2" y="2" width="12" height="8" fill="#111"/><path d="M3 4h3" stroke="#ddd" stroke-width=".8"/><path d="M4 12h8l1 2H3z" fill="#ddd"/></svg>
  <div class="tt" style="left:29px;top:3px">Консоль - Konsole</div>
 </div>
 <div class="a" style="left:0;top:24px;width:380px;height:28px;background:#efefef;font-size:13px;color:#111">
  <span class="a" style="left:11px;top:4.5px">Сеанс</span>
  <span class="a" style="left:64px;top:4.5px">Правка</span>
  <span class="a" style="left:123px;top:4.5px">Вид</span>
  <span class="a" style="left:163px;top:4.5px">Закладки</span>
  <span class="a" style="left:237px;top:4.5px">Настройка</span>
  <span class="a" style="left:317px;top:4.5px">Справка</span>
 </div>
 <div class="a" style="left:4px;top:52px;width:380px;height:367px;background:#fff;border:2px solid #000;border-right:none;border-bottom:1px solid #888;overflow:hidden">
<pre class="a" style="left:1px;top:1px;font-size:13.33px;line-height:15px;color:#000">A:11284.2 ( 3:08:04.2) of 0.0 (unknown)  1.0%
ICY Info: StreamTitle='4everfreebrony - They Come
 Plus Radio Super GO! ';
A:11468.3 ( 3:11:08.2) of 0.0 (unknown)  1.0%
ICY Info: StreamTitle='ashley eriksson - island
er GO! ';
A:11573.5 ( 3:12:53.4) of 0.0 (unknown)  1.0%
ICY Info: StreamTitle='Back From The Shadows Again
lus Radio Super GO! ';
A:11685.4 ( 3:14:45.3) of 0.0 (unknown)  1.0%
ICY Info: StreamTitle='Anime Super Go Bumper 2
er GO! ';
A:11692.6 ( 3:14:52.5) of 0.0 (unknown)  1.0%
ICY Info: StreamTitle='ReadyPlayerOneTrailer_HD
Radio Super GO! ';
A:11840.6 ( 3:17:20.5) of 0.0 (unknown)  1.0%
ICY Info: StreamTitle='Love Hina - Summer By The
o Super GO! ';
A:11961.2 ( 3:19:21.2) of 0.0 (unknown)  1.0%
ICY Info: StreamTitle='Crystal Chronicles~0.04
 ';
A:12074.1 ( 3:21:14.1) of 0.0 (unknown)  1.0%
ICY Info: StreamTitle='Mothera Pop~0.24-1.47 - 
A:12112.1 ( 3:21:52.0) of 0.0 (unknown)  1.0%</pre>
  <div class="a" style="left:0px;top:346px;width:9px;height:16px;border:1px solid #000"></div>
 </div>
 <div class="a" style="left:0;top:420px;width:380px;height:34px;background:#e4e4e4">
  <div class="a" style="left:6px;top:4px;width:23px;height:21px;border:1px solid #9a9a9a;border-radius:3px;background:linear-gradient(#f4f4f4,#d8d8d8)"><svg width="21" height="19"><path d="M3 13l4-4h8l3 4z" fill="#fff" stroke="#666" stroke-width=".7"/><rect x="3" y="14" width="15" height="2" fill="#eee" stroke="#666" stroke-width=".5"/><path d="M13 2l2 3 3-1-1 3 3 2-3 1 1 3-3-1-2 3-1-3" fill="#ffcc00" stroke="#e08000" stroke-width=".5"/></svg></div>
  <div class="a" style="left:31px;top:1px;width:94px;height:26px;border:1px solid #a8a8a8;border-top:none;border-radius:0 0 4px 4px;background:#f0f0f0"></div>
  <div class="a" style="left:125px;top:0px;width:112px;height:24px;border:1px solid #b4b4b4;border-top:none;background:linear-gradient(#e8e8e8,#dadada)"></div>
  <div class="a" style="left:237px;top:0px;width:112px;height:24px;border:1px solid #b4b4b4;border-top:none;background:linear-gradient(#e8e8e8,#dadada)"></div>
  <div class="a" style="left:349px;top:0px;width:60px;height:24px;border:1px solid #b4b4b4;border-top:none;background:linear-gradient(#e8e8e8,#dadada)"></div>
  <svg class="a" style="left:39px;top:6px" width="17" height="16" viewBox="0 0 16 16"><rect x="1" y="1" width="14" height="10" rx="1" fill="#e8e8e8" stroke="#999" stroke-width=".5"/><rect x="2" y="2" width="12" height="8" fill="#111"/><path d="M4 12h8l1 2H3z" fill="#ddd"/></svg>
  <span class="a" style="left:61px;top:4px;font-size:13.5px;color:#111">Консоль</span>
  <svg class="a" style="left:135px;top:7px" width="17" height="16" viewBox="0 0 16 16"><rect x="1" y="1" width="14" height="10" rx="1" fill="#e8e8e8" stroke="#999" stroke-width=".5"/><rect x="2" y="2" width="12" height="8" fill="#111"/><path d="M4 12h8l1 2H3z" fill="#ddd"/></svg>
  <span class="a" style="left:155px;top:5px;font-size:13px;color:#111">Консоль #2</span>
  <svg class="a" style="left:247px;top:7px" width="17" height="16" viewBox="0 0 16 16"><rect x="1" y="1" width="14" height="10" rx="1" fill="#e8e8e8" stroke="#999" stroke-width=".5"/><rect x="2" y="2" width="12" height="8" fill="#111"/><path d="M4 12h8l1 2H3z" fill="#ddd"/></svg>
  <span class="a" style="left:267px;top:5px;font-size:13px;color:#111">Консоль #3</span>
  <svg class="a" style="left:358px;top:7px" width="17" height="16" viewBox="0 0 16 16"><rect x="1" y="1" width="14" height="10" rx="1" fill="#e8e8e8" stroke="#999" stroke-width=".5"/><rect x="2" y="2" width="12" height="8" fill="#111"/><path d="M4 12h8l1 2H3z" fill="#ddd"/></svg>
 </div>
</div>

<div class="a" style="left:480px;top:57px;width:1px;height:794px;background:#22457e"></div>
<div class="a" style="left:481px;top:56px;width:1031px;height:795px;background:#3f88d6;border:1px solid #2a5f9e;border-left:1px solid #4a90e0;border-top:1px solid #6aaae8">
 <div class="a" style="left:0;top:0;width:1029px;height:23px;background:linear-gradient(#4a90da 0,#3e86d4 3px,#397bc4 6px,#3b82cf 14px,#3e8ad8 23px)"></div>
 <svg class="a" style="left:4px;top:2px" width="20" height="19" viewBox="0 0 20 19"><path d="M3 2l14 15M17 2L3 17" stroke="#2e2e2e" stroke-width="3.6"/><path d="M3.5 2.5l13 14M16.5 2.5l-13 14" stroke="#7a706a" stroke-width="1.2"/></svg>
 <div class="tt" style="left:29px;top:3px;color:#fff8ea;text-shadow:1px 1px 1px #2a5a90;letter-spacing:-0.22px">PCem v17 - 101% - [486] Award SiS 496/497 - i486DX2/66 - Click to capture mouse</div>
 <div class="a" style="left:986px;top:3px;width:18px;height:18px;border:1px solid #5b96d6;border-radius:3px;background:#5a9ad8"><svg width="16" height="16"><path d="M3 11.5h9" stroke="#fff" stroke-width="2.4"/></svg></div>
 <div class="a" style="left:1006px;top:3px;width:18px;height:18px;border:1px solid #5b96d6;border-radius:3px;background:#5a9ad8"><svg width="16" height="16"><path d="M3.5 3.5l9 9M12.5 3.5l-9 9" stroke="#fff" stroke-width="2.4"/></svg></div>
 <div class="a" style="left:2px;top:23px;width:1025px;height:768px;background:#6f8087;overflow:hidden">
  <!-- tabs -->
  <div class="a" style="left:1px;top:1px;width:64px;height:16px;background:#1b1872;border:1px solid #000;border-bottom:none"></div>
  <div class="a" style="left:3px;top:3px;font-size:11px;font-weight:bold;color:#e8e4d8">xterm</div>
  <div class="a" style="left:483px;top:1px;width:64px;height:16px;background:#4a7db4;border:1px solid #000;border-bottom:none"></div>
  <div class="a" style="left:485px;top:3px;font-size:11px;font-weight:bold;color:#fff">xterm</div>
  <!-- left xterm -->
  <div class="a" style="left:0px;top:16px;width:482px;height:720px;background:#000">
   <div class="a" style="left:1px;top:1px;width:479px;height:16px;background:#1b1872"></div>
   <div class="a" style="left:9px;top:9px;width:2px;height:2px;background:#ddd"></div>
   <div class="a" style="left:210px;top:3px;font-size:12px;font-weight:bold;color:#e8e4d8">xterm</div>
   <svg class="a" style="left:437px;top:3px" width="42" height="13"><rect x="1.5" y="8.5" width="8" height="2" stroke="#d8d2b4" fill="none"/><path d="M16.5 3V10.5h8V3" stroke="#d8d2b4" fill="none"/><path d="M16 3h9" stroke="#d8d2b4" stroke-width="2"/><path d="M31.5 1.5l9 9.5M40.5 1.5l-9 9.5" stroke="#d8d2b4"/></svg>
   <div class="a" style="left:1px;top:19px;width:480px;height:695px;background:#1b1872"></div>
   <div class="a" style="left:2px;top:19px;width:478px;height:694px;background:#f6faf6;overflow:hidden">
    <div class="a" style="left:2px;top:81px;width:468px;height:13px;background:#000"></div>
    <div class="a" style="left:2px;top:68px;width:7px;height:14px;border:1px solid #000"></div>
    <pre class="a" style="left:2px;top:4px;font-size:13px;line-height:13px;transform:scaleX(0.7692);transform-origin:0 0;color:#000">top - 01:51:45 up 3 min,  3 users,  load average: 0.96, 0.50, 0.20
Tasks:  43 total,   1 running,  42 sleeping,   0 stopped,   0 zombie
Cpu(s):  8.5%us,  2.7%sy,  0.0%ni, 88.7%id,  0.0%wa,  0.0%hi,  0.0%si,  0.0%st
Mem:     10196k total,     9236k used,      960k free,        92k buffers
Swap:   160640k total,     7644k used,   152996k free,     3212k cached

<span style="color:#fff">  PID USER      PR  NI  VIRT  RES  SHR S %CPU %MEM    TIME+  COMMAND</span>
 1017 root      20   0  2036  580  436 R  5.2  5.7   0:03.69 top
  954 root      19  -1 13040 1264  480 S  3.4 12.4   0:18.83 X
 1014 root      20   0  5012  772  520 S  2.1  7.6   0:02.70 xterm
    1 root      20   0   576   56   36 S  0.0  0.5   0:02.08 init
    2 root      20   0     0    0    0 S  0.0  0.0   0:00.00 kthreadd
    3 root      RT   0     0    0    0 S  0.0  0.0   0:00.00 migration/0
    4 root      20   0     0    0    0 S  0.0  0.0   0:00.00 ksoftirqd/0
    5 root      20   0     0    0    0 S  0.0  0.0   0:00.23 events/0
    6 root      20   0     0    0    0 S  0.0  0.0   0:00.00 cpuset
    7 root      20   0     0    0    0 S  0.0  0.0   0:00.24 khelper
   10 root      20   0     0    0    0 S  0.0  0.0   0:00.00 netns
   11 root      20   0     0    0    0 S  0.0  0.0   0:00.00 async/mgr
  254 root      20   0     0    0    0 S  0.0  0.0   0:00.00 sync_supers
  256 root      20   0     0    0    0 S  0.0  0.0   0:00.00 bdi-default
  258 root      20   0     0    0    0 S  0.0  0.0   0:01.70 kblockd/0
  270 root      20   0     0    0    0 S  0.0  0.0   0:00.00 ksuspend_usbd
  275 root      20   0     0    0    0 S  0.0  0.0   0:00.00 khubd
  278 root      20   0     0    0    0 S  0.0  0.0   0:00.00 kseriod
  303 root      20   0     0    0    0 S  0.0  0.0   0:00.00 rpciod/0
  320 root      20   0     0    0    0 S  0.0  0.0   0:05.84 kswapd0
  321 root      20   0     0    0    0 S  0.0  0.0   0:00.00 aio/0
  322 root      20   0     0    0    0 S  0.0  0.0   0:00.00 nfsiod
  324 root      20   0     0    0    0 S  0.0  0.0   0:00.00 crypto/0
  744 root      20   0     0    0    0 S  0.0  0.0   0:00.00 kpsmoused
  757 root      20   0     0    0    0 S  0.0  0.0   0:00.00 kstriped
  761 root      20   0     0    0    0 S  0.0  0.0   0:00.00 kondemand/0
  812 root      20   0     0    0    0 S  0.0  0.0   0:00.15 kjournald
  821 root      20   0     0    0    0 S  0.0  0.0   0:00.04 flush-3:0
  854 root      20   0  1484   40   40 S  0.0  0.4   0:00.00 dhcpcd
  875 root      20   0  1524  108   72 S  0.0  1.1   0:00.19 syslogd
  878 root      20   0  1460   48   48 S  0.0  0.5   0:00.21 klogd
  887 root      20   0  1584   84   84 S  0.0  0.8   0:00.01 crond
  891 root      20   0  1512   48   48 S  0.0  0.5   0:00.02 gpm
  896 root      20   0  2388   48   48 S  0.0  0.5   0:00.49 bash
  897 root      20   0  1456   48   48 S  0.0  0.5   0:00.02 agetty
  898 root      20   0  1456   48   48 S  0.0  0.5   0:00.03 agetty
  941 root      20   0  2120   48   48 S  0.0  0.5   0:00.16 startx
  953 root      20   0  2328   56   56 S  0.0  0.5   0:00.07 xinit
 1011 root      20   0  2108   60   60 S  0.0  0.6   0:00.09 sh
 1012 root      20   0  4816  616  428 S  0.0  6.0   0:01.84 fluxbox
 1016 root      20   0  2364   84   84 S  0.0  0.8   0:00.31 bash
 1018 root      20   0  5016 1288  920 S  0.0 12.6   0:01.82 xterm
 1020 root      20   0  2364  992  724 S  0.0  9.7   0:00.46 bash</pre>
   </div>
   <div class="a" style="left:1px;top:715px;width:480px;height:4px;background:#1b1872"></div>
   <div class="a" style="left:1px;top:715px;width:26px;height:4px;background:#c0c0bc"></div>
   <div class="a" style="left:455px;top:715px;width:26px;height:4px;background:#c0c0bc"></div>
  </div>
  <!-- right xterm -->
  <div class="a" style="left:482px;top:16px;width:530px;height:720px;background:#000">
   <div class="a" style="left:1px;top:1px;width:528px;height:16px;background:#4a7db4"></div>
   <div class="a" style="left:9px;top:9px;width:2px;height:2px;background:#fff"></div>
   <div class="a" style="left:235px;top:3px;font-size:12px;font-weight:bold;color:#fff">xterm</div>
   <svg class="a" style="left:485px;top:3px" width="42" height="13"><rect x="1.5" y="8.5" width="8" height="2" stroke="#fff" fill="none"/><path d="M16.5 3V10.5h8V3" stroke="#fff" fill="none"/><path d="M16 3h9" stroke="#fff" stroke-width="2"/><path d="M31.5 1.5l9 9.5M40.5 1.5l-9 9.5" stroke="#fff"/></svg>
   <div class="a" style="left:1px;top:19px;width:528px;height:695px;background:#4a7db4"></div>
   <div class="a" style="left:2px;top:20px;width:526px;height:693px;background:#f6faf6;overflow:hidden">
    <div class="a" style="left:86px;top:327px;width:6px;height:13px;background:#000"></div>
    <pre class="a" style="left:1px;top:3px;font-size:13px;line-height:13px;transform:scaleX(0.7692);transform-origin:0 0;color:#000">bash-2.05b# uname -a
Linux darkstar 2.6.32.26 #17 SMP Fri Jun 24 01:22:03 MSK 2022 i486 unknown unknown GNU/
Linux
bash-2.05b# cat /proc/cpuinfo
processor       : 0
vendor_id       : unknown
cpu family      : 4
model           : 0
model name      : 486
stepping        : unknown
fdiv_bug        : no
hlt_bug         : no
f00f_bug        : no
coma_bug        : no
fpu             : yes
fpu_exception   : no
cpuid level     : -1
wp              : yes
flags           : up
bogomips        : 62.20
clflush size    : 32
cache_alignment : 32
address sizes   : 32 bits physical, 32 bits virtual
power management:

bash-2.05b# 5F</pre>
   </div>
   <div class="a" style="left:1px;top:715px;width:528px;height:4px;background:#4a7db4"></div>
   <div class="a" style="left:1px;top:715px;width:26px;height:4px;background:#c0c0bc"></div>
   <div class="a" style="left:502px;top:715px;width:27px;height:4px;background:#c0c0bc"></div>
  </div>
  <!-- toolbar -->
  <div class="a" style="left:174px;top:748px;width:677px;height:20px;background:#1b1872;border:1px solid #000;border-bottom:none;font-size:11px;font-weight:bold;color:#fff">
   <span class="a" style="left:10px;top:4px">one</span>
   <svg class="a" style="left:46px;top:7px" width="20" height="5"><path d="M1 2.5l3-2v4z M15 .5l3 2-3 2z" fill="#fff"/></svg>
   <span class="a" style="left:322px;top:4px">xterm</span>
   <svg class="a" style="left:609px;top:7px" width="20" height="5"><path d="M1 2.5l3-2v4z M15 .5l3 2-3 2z" fill="#fff"/></svg>
   <span class="a" style="left:642px;top:3px;font-size:12px">1:51</span>
  </div>
 </div>
</div>
<div class="a" style="left:481px;top:850px;width:1031px;height:2px;background:#1a4a78"></div><div class="a" style="left:481px;top:852px;width:1031px;height:1px;background:#2a6ac8"></div>
<svg class="a" style="left:998px;top:505px" width="22" height="19" viewBox="0 0 22 19"><rect x="2" y="3" width="4" height="13" fill="#c8c8c8"/><rect x="4" y="1" width="15" height="14" rx="1" fill="#e8e8ee" stroke="#aaa" stroke-width=".5"/><rect x="5" y="2.5" width="12" height="10" fill="#1040d0"/><rect x="6" y="3" width="10" height="4" fill="#4a80e8"/><rect x="8" y="9" width="11" height="8" fill="#d8d8d8" stroke="#999" stroke-width=".5"/><circle cx="15" cy="12.5" r="2.5" fill="#1a40a0" stroke="#eee"/><rect x="9" y="15" width="11" height="3" fill="#333"/><rect x="19" y="10" width="2" height="7" fill="#333"/></svg>
<svg class="a" style="left:1353px;top:522px" width="10" height="16" viewBox="0 0 10 16"><path d="M1.5 1.5h2.5l1 1.5 1-1.5h2.5M5 3v10M1.5 14.5h2.5l1-1.5 1 1.5h2.5" stroke="#000" stroke-width="1.3" fill="none"/></svg>
<div class="a" style="left:0;top:853px;width:1600px;height:47px;background:linear-gradient(#d0d0d0 0,#bebebe 1px,#c2c2c2 4px,#d4d4d4 22px,#f2f2f2 42px,#f8f8f8 46px)"></div>
<div class="a" style="left:0;top:899px;width:1600px;height:1px;background:#9a9a9a"></div>
<svg class="a" style="left:6px;top:861px" width="33" height="33" viewBox="0 0 33 33"><defs><linearGradient id="kg" x1="0" y1="0" x2="0" y2="1"><stop offset="0" stop-color="#5a9af0"/><stop offset="1" stop-color="#2a62c8"/></linearGradient></defs><rect x="1" y="1" width="31" height="31" rx="3" fill="url(#kg)" stroke="#1a4a9a"/><g fill="#fff"><circle cx="12" cy="19" r="7"/><path d="M12 9l2 3h-4zM12 29l2-3h-4zM2 19l3 2v-4zM22 19l-3 2v-4zM5 12l3.5 1-1.5 2zM19 26l-3.5-1 1.5-2zM5 26l1-3.5 2 1.5zM19 12l-1 3.5-2-1.5z"/></g><circle cx="12" cy="19" r="3.5" fill="#3a78d8"/><path d="M15 5h4v9l7-9h5l-8 10 8 11h-5l-7-9v2h-4z" fill="#fff" stroke="#3a78d8" stroke-width=".8"/></svg>
<svg class="a" style="left:51px;top:860px" width="30" height="32" viewBox="0 0 30 32"><path d="M15 1L1 15l2 2 12-12 12 12 2-2z" fill="#f06a10"/><path d="M15 3L2 16h26z" fill="#f58a30"/><path d="M5 16h20v15H5z" fill="#f4f4f4" stroke="#bbb" stroke-width=".6"/><rect x="12" y="20" width="6" height="11" fill="#f09020"/><rect x="11" y="12" width="8" height="4" rx="1" fill="#e8d8c0"/></svg>
<svg class="a" style="left:94px;top:860px" width="32" height="32" viewBox="0 0 32 32"><g fill="#c8ccd8" stroke="#8890a8" stroke-width=".6"><path d="M5 1l6 6-4 3z"/><path d="M29 30l-7-5 3-4z"/><path d="M1 22l7-4 1 5z"/><path d="M12 31l2-7 4 2z"/><path d="M29 4l-7 3 2 4z"/></g><circle cx="16" cy="15" r="10" fill="#eef2f8" stroke="#aab4c8"/><defs><radialGradient id="kqg" cx=".65" cy=".35" r=".7"><stop offset="0" stop-color="#bfe0ff"/><stop offset=".5" stop-color="#3a90f0"/><stop offset="1" stop-color="#1050c0"/></radialGradient></defs><circle cx="16.5" cy="15" r="8.5" fill="url(#kqg)"/><path d="M10 12c2-1 4 0 5 2s-1 3 1 5M18 8c2 1 4 2 3 5" stroke="#fff" stroke-width="1.4" fill="none" opacity=".7"/></svg>
<svg class="a" style="left:137px;top:861px" width="34" height="32" viewBox="0 0 34 32"><rect x="1" y="1" width="32" height="24" rx="3" fill="#f0f0f0" stroke="#999"/><rect x="4" y="4" width="26" height="18" fill="#111"/><path d="M7 8l3 2-3 2M12 13h4" stroke="#fff" stroke-width="1.2" fill="none"/><ellipse cx="17" cy="29" rx="10" ry="2.5" fill="#e8e8e8" stroke="#999" stroke-width=".6"/><rect x="13" y="25" width="8" height="3" fill="#ddd"/></svg>
<div class="a" style="left:222px;top:853px;width:40px;height:24px;background:#fff"></div>
<div class="a" style="left:262px;top:853px;width:40px;height:24px;background:#d2d2d2;border-left:1px solid #fff"></div>
<div class="a" style="left:222px;top:877px;width:40px;height:23px;background:#d2d2d2;border-top:1px solid #fff"></div>
<div class="a" style="left:262px;top:877px;width:40px;height:23px;background:#d2d2d2;border-top:1px solid #fff;border-left:1px solid #fff"></div>
<div class="a" style="left:224px;top:861px;width:11px;height:9px;border:1px solid #333;background:#fff"></div>
<div class="a" style="left:235px;top:859px;width:24px;height:16px;background:#6890b8"></div>
<svg class="a" style="left:236px;top:859px" width="22" height="16"><path d="M3 1l14 14M17 1L4 15" stroke="#3a3a3a" stroke-width="2.4"/><path d="M3 1l14 14M17 1L4 15" stroke="#8a8070" stroke-width="1"/></svg>
<div class="a" style="left:226px;top:885px;width:16px;height:10px;border:1px solid #333;background:#e8e8ef"></div>
<div class="a" style="left:241px;top:856px;font-size:14px;color:#111">1</div>
<div class="a" style="left:279px;top:856px;font-size:14px;color:#111">2</div>
<div class="a" style="left:241px;top:880px;font-size:14px;color:#111">3</div>
<div class="a" style="left:279px;top:880px;font-size:14px;color:#111">4</div>
<div class="a" style="left:259px;top:858px;width:1px;height:14px;background:#777"></div>
<div class="a" style="left:301px;top:858px;width:1px;height:14px;background:#777"></div>
<div class="a" style="left:259px;top:881px;width:1px;height:14px;background:#777"></div>
<div class="a" style="left:301px;top:881px;width:1px;height:14px;background:#777"></div>
<svg class="a" style="left:316px;top:857px" width="16" height="16"><rect x=".5" y=".5" width="15" height="15" fill="#3a4a50" stroke="#222"/><path d="M3 13l3-9M6 13l1-5" stroke="#ddd"/><circle cx="11" cy="8" r="2" fill="#6f6"/></svg>
<div class="a" style="left:337px;top:858px;width:150px;overflow:hidden;white-space:nowrap;font-size:13px;color:#111;">gkrellm</div>
<svg class="a" style="left:315px;top:879px" width="17" height="16" viewBox="0 0 17 16"><rect x="1" y="1" width="15" height="11" rx="1" fill="#e8e8e8" stroke="#888" stroke-width=".5"/><rect x="2" y="2" width="13" height="8.5" fill="#111"/><path d="M3.5 4h3" stroke="#ccc" stroke-width=".8"/><path d="M5 12h7l1.5 3h-10z" fill="#ddd" stroke="#999" stroke-width=".4"/></svg>
<div class="a" style="left:337px;top:881px;width:150px;overflow:hidden;white-space:nowrap;font-size:13px;color:#111;">Консоль - Konsole</div>
<svg class="a" style="left:513px;top:856px" width="17" height="16" viewBox="0 0 17 16"><rect x="1" y="1" width="15" height="11" rx="1" fill="#e8e8e8" stroke="#888" stroke-width=".5"/><rect x="2" y="2" width="13" height="8.5" fill="#111"/><path d="M3.5 4h3" stroke="#ccc" stroke-width=".8"/><path d="M5 12h7l1.5 3h-10z" fill="#ddd" stroke="#999" stroke-width=".4"/></svg>
<div class="a" style="left:535px;top:858px;width:172px;overflow:hidden;white-space:nowrap;font-size:13px;color:#111;-webkit-mask-image:linear-gradient(90deg,#000 85%,transparent)">mc [root@slax]:/mnt - Консоль</div>
<svg class="a" style="left:513px;top:879px" width="16" height="17" viewBox="0 0 16 17"><path d="M1 1h11l3 3v12H1z" fill="#f8f8f8" stroke="#c8c8c8" stroke-width=".6"/><path d="M2 1.5h10" stroke="#5a8ae0" stroke-width="1.4"/><circle cx="8" cy="9.5" r="5.6" fill="#2a48b0"/><circle cx="7" cy="8" r="3.2" fill="#7a9ae8" opacity=".8"/><path d="M4 7.5c1.5-.5 2.5.5 3 2s1.5 2 .5 3.5M9 5.5c1 1 2.5 1.5 2 3.5" stroke="#1a2a80" stroke-width="1.3" fill="none"/></svg>
<div class="a" style="left:535px;top:881px;width:172px;overflow:hidden;white-space:nowrap;font-size:13px;color:#111;-webkit-mask-image:linear-gradient(90deg,#000 85%,transparent)">Mac GUI :: Sabina TCP/IP Progress</div>
<svg class="a" style="left:712px;top:856px" width="16" height="17" viewBox="0 0 16 17"><path d="M1 1h11l3 3v12H1z" fill="#f8f8f8" stroke="#c8c8c8" stroke-width=".6"/><path d="M2 1.5h10" stroke="#5a8ae0" stroke-width="1.4"/><circle cx="8" cy="9.5" r="5.6" fill="#2a48b0"/><circle cx="7" cy="8" r="3.2" fill="#7a9ae8" opacity=".8"/><path d="M4 7.5c1.5-.5 2.5.5 3 2s1.5 2 .5 3.5M9 5.5c1 1 2.5 1.5 2 3.5" stroke="#1a2a80" stroke-width="1.3" fill="none"/></svg>
<div class="a" style="left:733px;top:858px;width:172px;overflow:hidden;white-space:nowrap;font-size:13px;color:#111;-webkit-mask-image:linear-gradient(90deg,#000 85%,transparent)">Setting up Executor For Windows</div>
<svg class="a" style="left:712px;top:879px" width="17" height="17" viewBox="0 0 17 17"><path d="M13.5 8.2H8.6v2h2.8c-.3 1.3-1.4 2.2-2.9 2.2a3.4 3.4 0 1 1 2.3-5.9l1.5-1.5A5.5 5.5 0 1 0 8.5 14c3 0 5.1-2.1 5.1-5.1 0-.3 0-.5-.1-.7z" fill="#4285f4"/><path d="M3.6 6.2l1.7 1.3a3.4 3.4 0 0 1 5.5-1.8l1.5-1.5A5.5 5.5 0 0 0 3.6 6.2z" fill="#ea4335"/><path d="M3.6 10.8a5.5 5.5 0 0 0 4.9 3.2c1.4 0 2.7-.5 3.6-1.3l-1.7-1.4c-.5.4-1.2.6-1.9.6a3.4 3.4 0 0 1-3.2-2.3z" fill="#34a853"/><path d="M3.6 6.2a5.5 5.5 0 0 0 0 4.6l1.7-1.3a3.4 3.4 0 0 1 0-2z" fill="#fbbc05"/></svg>
<div class="a" style="left:733px;top:881px;width:172px;overflow:hidden;white-space:nowrap;font-size:13px;color:#111;-webkit-mask-image:linear-gradient(90deg,#000 85%,transparent)">wxGTK3 pch - Поиск в Google</div>
<svg class="a" style="left:910px;top:856px" width="16" height="17" viewBox="0 0 16 17"><path d="M1 1h11l3 3v12H1z" fill="#f8f8f8" stroke="#c8c8c8" stroke-width=".6"/><path d="M2 1.5h10" stroke="#5a8ae0" stroke-width="1.4"/><circle cx="8" cy="9.5" r="5.6" fill="#2a48b0"/><circle cx="7" cy="8" r="3.2" fill="#7a9ae8" opacity=".8"/><path d="M4 7.5c1.5-.5 2.5.5 3 2s1.5 2 .5 3.5M9 5.5c1 1 2.5 1.5 2 3.5" stroke="#1a2a80" stroke-width="1.3" fill="none"/></svg>
<div class="a" style="left:931px;top:858px;width:172px;overflow:hidden;white-space:nowrap;font-size:13px;color:#111;-webkit-mask-image:linear-gradient(90deg,#000 85%,transparent);color:#8a8a8a">Index of /pub/linux/kernel/v2.6</div>
<svg class="a" style="left:910px;top:879px" width="17" height="17"><path d="M2 2l13 13M15 2L2 15" stroke="#333" stroke-width="2.6"/><path d="M2 2l13 13M15 2L2 15" stroke="#777" stroke-width="1"/></svg>
<div class="a" style="left:930px;top:881px;width:172px;overflow:hidden;white-space:nowrap;font-size:13px;color:#111;-webkit-mask-image:linear-gradient(90deg,#000 85%,transparent);font-weight:bold">PCem v17 - 101% - [486] Award</div>
<svg class="a" style="left:1108px;top:856px" width="17" height="16" viewBox="0 0 17 16"><rect x="1" y="1" width="15" height="11" rx="1" fill="#e8e8e8" stroke="#888" stroke-width=".5"/><rect x="2" y="2" width="13" height="8.5" fill="#111"/><path d="M3.5 4h3" stroke="#ccc" stroke-width=".8"/><path d="M5 12h7l1.5 3h-10z" fill="#ddd" stroke="#999" stroke-width=".4"/></svg>
<div class="a" style="left:1129px;top:858px;width:172px;overflow:hidden;white-space:nowrap;font-size:13px;color:#111;">Консоль - Konsole &lt;3&gt;</div>
<svg class="a" style="left:1315px;top:866px" width="170" height="24" viewBox="0 0 170 24"><path d="M3 10a6 6 0 0 1 12 0" stroke="#888" stroke-width="2" fill="none"/><ellipse cx="9" cy="15" rx="7" ry="5" fill="#4060b0"/><path d="M5 18v4M12 18v4" stroke="#e0b020" stroke-width="2"/><rect x="16" y="2" width="7" height="20" fill="#fff" stroke="#333"/><rect x="17" y="5" width="5" height="16" fill="#1030e0"/><rect x="26" y="3" width="21" height="14" fill="#fff"/><path d="M26 3.5h21M26 5.5h21M26 7.5h21M26 9.5h21M26 11.5h21M26 13.5h21M26 15.5h21" stroke="#e02020" stroke-width="1"/><rect x="26" y="3" width="9" height="7" fill="#2a3a8a"/><path d="M52 8h4l6-6v20l-6-6h-4z" fill="#3aa0d0" stroke="#1a5080"/><path d="M63 6c3 3 3 9 0 12" stroke="#888" stroke-width="2" fill="none"/><rect x="75" y="2" width="17" height="20" rx="2" fill="#f8e8b0" stroke="#d8a030"/><rect x="79" y="0" width="9" height="4" rx="1" fill="#fff" stroke="#bbb"/><text x="80" y="17" font-family="Liberation Sans" font-size="11" fill="#888">k</text><path d="M103 10a6 6 0 0 1 12 0" stroke="#888" stroke-width="2" fill="none"/><ellipse cx="109" cy="15" rx="7" ry="5" fill="#4060b0"/><path d="M105 18v4M112 18v4" stroke="#e0b020" stroke-width="2"/><rect x="121" y="1" width="21" height="17" fill="#fff" stroke="#3a7ad0"/><rect x="121" y="1" width="21" height="3" fill="#3a7ad0"/><path d="M121 8h21M121 12h21M126 4v14M131 4v14M136 4v14" stroke="#6a9ad8" stroke-width=".6"/><path d="M134 22c0-6 2-9 4-9s4 3 4 9z" fill="#f0a020"/><circle cx="138" cy="12" r="2" fill="#f0a020"/><rect x="146" y="6" width="14" height="11" fill="#222" stroke="#666"/><rect x="144" y="18" width="16" height="3" fill="#aaa"/><rect x="160" y="2" width="7" height="20" fill="#60c030" stroke="#ddd"/><rect x="160" y="2" width="7" height="8" fill="#e8f0e0"/></svg>
<svg class="a" style="left:0;top:0" width="1600" height="900" style="pointer-events:none"><path d="M1498 859h11v3h-11zM1506 859h3v11h-3zM1506 869h3v11h-3zM1498 877h11v3h-11zM1498 869h3v11h-3zM1498 859h3v11h-3zM1534 859h11v3h-11zM1534 859h3v11h-3zM1534 868h11v3h-11zM1542 869h3v11h-3zM1534 877h11v3h-11zM1570 859h11v3h-11zM1570 859h3v11h-3zM1570 868h11v3h-11zM1578 869h3v11h-3zM1570 877h11v3h-11zM1582 859h11v3h-11zM1590 859h3v11h-3zM1582 868h11v3h-11zM1582 869h3v11h-3zM1582 877h11v3h-11z" fill="#c8c8c8" transform="translate(1.5 1.5)"/><path d="M1498 859h11v3h-11zM1506 859h3v11h-3zM1506 869h3v11h-3zM1498 877h11v3h-11zM1498 869h3v11h-3zM1498 859h3v11h-3zM1534 859h11v3h-11zM1534 859h3v11h-3zM1534 868h11v3h-11zM1542 869h3v11h-3zM1534 877h11v3h-11zM1570 859h11v3h-11zM1570 859h3v11h-3zM1570 868h11v3h-11zM1578 869h3v11h-3zM1570 877h11v3h-11zM1582 859h11v3h-11zM1590 859h3v11h-3zM1582 868h11v3h-11zM1582 869h3v11h-3zM1582 877h11v3h-11z" fill="#000"/><path d="M1519.5 860l2 -1v11l-3 1z M1519 870l3 1v10l-3 -2z M1555.5 860l2 -1v11l-3 1z M1555 870l3 1v10l-3 -2z" fill="#000"/></svg>
<div class="a" style="left:1525px;top:885.5px;font-size:10.8px;color:#101020">24/06/22</div></body></html>
